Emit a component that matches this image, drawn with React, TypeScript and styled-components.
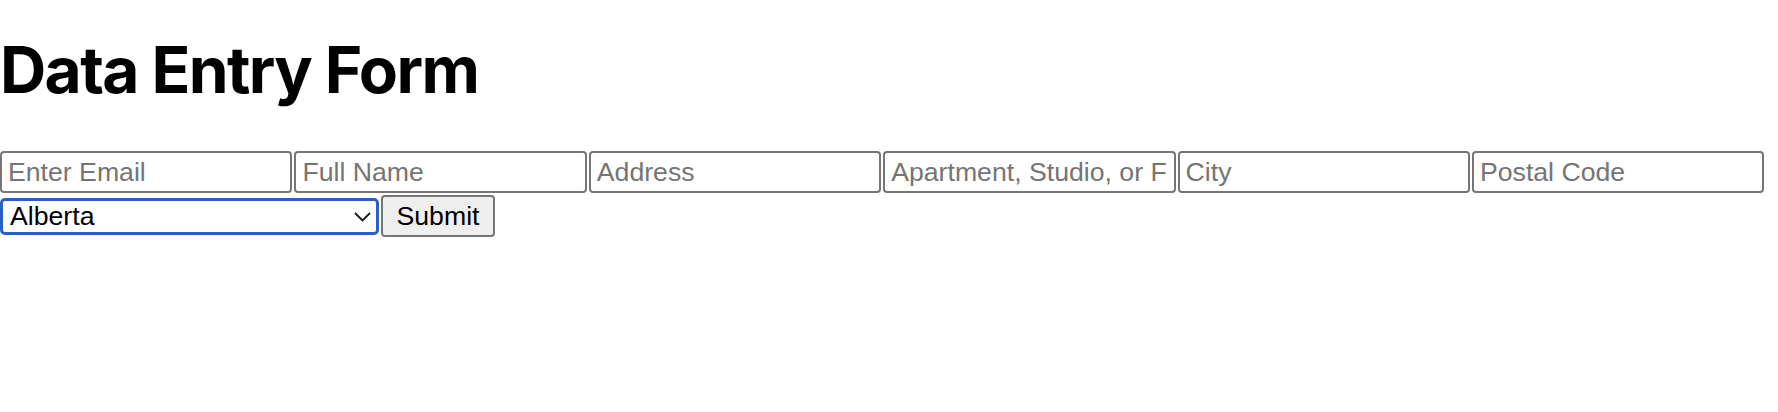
import React from "react";
import styled, { createGlobalStyle } from "styled-components";

const Global = createGlobalStyle`
  html, body { margin: 0; padding: 0; background: #ffffff; }
  body { font-family: "Liberation Sans", Arial, sans-serif; }
  * { box-sizing: border-box; }
`;

const Page = styled.div`
  display: flex;
  flex-direction: column;
`;

const Title = styled.h1`
  margin: 31px 0 42px 0;
  font-family: Inter, "Noto Sans", sans-serif;
  font-weight: 700;
  font-size: 64px;
  line-height: 78px;
  letter-spacing: -0.025em;
  color: #000;
`;

const Form = styled.form`
  display: flex;
  flex-direction: column;
  row-gap: 2px;
`;

const Row = styled.div`
  display: flex;
  align-items: center;
  column-gap: 2px;
`;

const TextInput = styled.input`
  width: 292.4px;
  height: 42px;
  margin: 0;
  padding: 2px 6px;
  border: 2px solid #767676;
  border-radius: 4px;
  font-family: "Liberation Sans", Arial, sans-serif;
  font-size: 26.67px;
  color: #000;
  background: #fff;
  outline: none;
  &::placeholder { color: #757575; opacity: 1; }
`;

const SelectWrap = styled.div`
  position: relative;
  width: 379px;
  height: 37px;
`;

const Select = styled.select`
  appearance: none;
  -webkit-appearance: none;
  width: 100%;
  height: 100%;
  margin: 0;
  padding: 0 30px 0 7px;
  border: 3px solid #2a5fc7;
  border-radius: 5px;
  background: #fff;
  font-family: "Liberation Sans", Arial, sans-serif;
  font-size: 26.67px;
  color: #000;
  outline: none;
`;

const Chevron = styled.svg`
  position: absolute;
  right: 8px;
  top: 14px;
  width: 17px;
  height: 10px;
  pointer-events: none;
`;

const Button = styled.button`
  width: 114px;
  height: 42px;
  margin: 0;
  padding: 0 12px;
  border: 2px solid #767676;
  border-radius: 4px;
  background: #efefef;
  font-family: "Liberation Sans", Arial, sans-serif;
  font-size: 26.67px;
  color: #000;
`;

const fields = [
  "Enter Email",
  "Full Name",
  "Address",
  "Apartment, Studio, or Floor",
  "City",
  "Postal Code",
];

const provinces = [
  "Alberta",
  "British Columbia",
  "Manitoba",
  "New Brunswick",
  "Newfoundland and Labrador",
  "Nova Scotia",
  "Ontario",
  "Prince Edward Island",
  "Quebec",
  "Saskatchewan",
];

export default function App() {
  return (
    <Page>
      <Global />
      <Title>Data Entry Form</Title>
      <Form onSubmit={(e) => e.preventDefault()}>
        <Row>
          {fields.map((f) => (
            <TextInput key={f} type="text" placeholder={f} />
          ))}
        </Row>
        <Row>
          <SelectWrap>
            <Select defaultValue="Alberta">
              {provinces.map((p) => (
                <option key={p} value={p}>
                  {p}
                </option>
              ))}
            </Select>
            <Chevron viewBox="0 0 17 10">
              <path d="M1 1 L8.5 8.5 L16 1" fill="none" stroke="#1a1a1a" strokeWidth="1.8" />
            </Chevron>
          </SelectWrap>
          <Button type="submit">Submit</Button>
        </Row>
      </Form>
    </Page>
  );
}
